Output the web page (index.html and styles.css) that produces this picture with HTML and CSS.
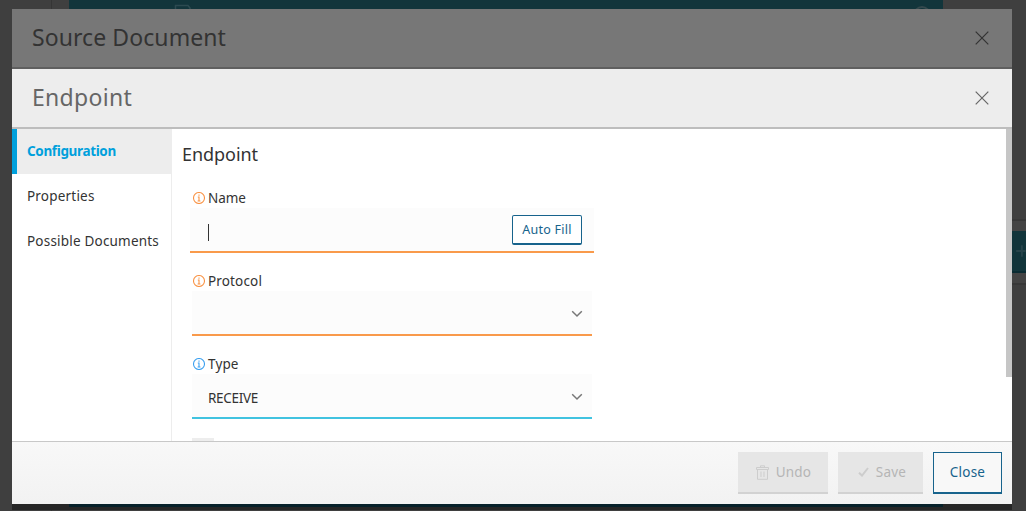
FILE: index.html
```html
<!DOCTYPE html>
<html lang="en">
<head>
<meta charset="utf-8">
<title>Endpoint</title>
<link rel="stylesheet" href="styles.css">
</head>
<body>
<div class="backdrop">
  <div class="page-line"></div>
  <div class="page-panel">
    <svg class="page-doc" width="18" height="16" viewBox="0 0 18 16"><path d="M1.5 16V1.5H14L16 4V16" fill="none" stroke="#2c4a50" stroke-width="1.5"/></svg>
    <svg class="page-round" width="18" height="18" viewBox="0 0 18 18"><circle cx="9" cy="9" r="8" fill="none" stroke="#34494d" stroke-width="2"/></svg>
  </div>
  <div class="page-node"><svg width="14" height="42" viewBox="0 0 14 42"><path d="M4 21H14M10 15V27" stroke="#27444a" stroke-width="2"/></svg></div>
</div>
<div class="under-shadow"><div class="under-strip"></div></div>
<div class="dialogs">
  <header class="bar bar-dim">
    <h1><span class="title-source">Source Document</span></h1>
    <svg class="x" width="14" height="14" viewBox="0 0 14 14"><path d="M.7.7 13.3 13.3M13.3.7.7 13.3"/></svg>
  </header>
  <section class="dialog">
    <header class="bar">
      <h1><span class="title-endpoint">Endpoint</span></h1>
      <svg class="x" width="14" height="14" viewBox="0 0 14 14"><path d="M.7.7 13.3 13.3M13.3.7.7 13.3"/></svg>
    </header>
    <div class="body">
      <nav class="tabs">
        <a class="tab active"><span class="t-config">Configuration</span></a>
        <a class="tab"><span class="t-props">Properties</span></a>
        <a class="tab"><span class="t-docs">Possible Documents</span></a>
      </nav>
      <main class="content">
        <h2>Endpoint</h2>
        <div class="field">
          <label><svg class="info warn" width="12" height="12" viewBox="0 0 12 12"><circle cx="6" cy="6" r="5.5"/><path d="M6 2.4V3.8M4.8 5H6V9M4.6 9H7.4"/></svg><span class="l-name">Name</span></label>
          <div class="control focused"><i class="caret"></i><button class="auto"><span>Auto Fill</span></button></div>
        </div>
        <div class="field">
          <label><svg class="info warn" width="12" height="12" viewBox="0 0 12 12"><circle cx="6" cy="6" r="5.5"/><path d="M6 2.4V3.8M4.8 5H6V9M4.6 9H7.4"/></svg><span class="l-protocol">Protocol</span></label>
          <div class="control required"><span></span><svg class="chev" width="12" height="8" viewBox="0 0 12 8"><path d="M1.2 1.3 6 6 10.8 1.3"/></svg></div>
        </div>
        <div class="field">
          <label><svg class="info" width="12" height="12" viewBox="0 0 12 12"><circle cx="6" cy="6" r="5.5"/><path d="M6 2.4V3.8M4.8 5H6V9M4.6 9H7.4"/></svg><span class="l-type">Type</span></label>
          <div class="control"><span class="value">RECEIVE</span><svg class="chev" width="12" height="8" viewBox="0 0 12 8"><path d="M1.2 1.3 6 6 10.8 1.3"/></svg></div>
        </div>
        <div class="checkbox"></div>
      </main>
      <div class="scroll"><div class="thumb"></div></div>
    </div>
    <footer class="footer">
      <button class="btn undo" disabled><svg width="13" height="15" viewBox="0 0 13 15"><path d="M.5 2.5H12.5V4.5H.5ZM4.5 2.5V.8H8.5V2.5M1.5 4.5V14.3H11.5V4.5M5 6.5V12M8 6.5V12"/></svg><span>Undo</span></button>
      <button class="btn save" disabled><svg width="11" height="10" viewBox="0 0 11 10"><path d="M1 5.8 4 8.6 10 1" stroke-width="2"/></svg><span>Save</span></button>
      <button class="btn close"><span>Close</span></button>
    </footer>
  </section>
</div>
</body>
</html>
```
FILE: styles.css
```css
* { box-sizing: border-box; }
body {
  margin: 0;
  height: 511px;
  position: relative;
  overflow: hidden;
  background: #3f3f3f;
  color: #333;
  font-family: "Noto Sans", "Open Sans", sans-serif;
  font-size: 13.5px;
}
h1, h2 { margin: 0; font-weight: 400; }
button { font: inherit; padding: 0; }
span { white-space: nowrap; }

.backdrop { position: absolute; inset: 0; }
.page-line { position: absolute; left: 51px; top: 0; width: 1px; height: 511px; background: #353535; }
.page-panel { position: absolute; left: 69px; top: 0; width: 874px; height: 507px; background: #12353b; }
.page-doc { position: absolute; left: 105px; top: 4px; }
.page-round { position: absolute; left: 844px; top: 6px; }
.page-node {
  position: absolute;
  left: 1012px;
  top: 219px;
  width: 14px;
  height: 66px;
  padding: 12px 0 10px;
  border-top: 2px solid #383838;
  border-bottom: 2px solid #383838;
  background: #444;
}
.page-node svg { display: block; margin-top: -2px; background: #12353b; border-bottom: 2px solid #0a2b32; }
.under-shadow { position: absolute; left: 12px; top: 504px; width: 1000px; height: 6px; background: #262626; }
.under-strip { margin-left: 57px; width: 874px; height: 3px; background: #07212a; }

.dialogs { position: relative; margin: 0 14px 0 12px; padding-top: 9px; }
.bar {
  display: flex;
  align-items: center;
  justify-content: space-between;
  height: 60px;
  padding: 0 23px 0 20px;
  background: #ededed;
  border-bottom: 2px solid #bdbdbd;
}
.bar h1 { padding-bottom: 2px; font-size: 23px; line-height: 32px; color: #666; letter-spacing: .3px; }
.bar-dim { background: #777; border-color: #5f5f5f; }
.bar-dim h1 { color: #333; letter-spacing: .08px; }
.x { fill: none; stroke: #666; stroke-width: 1.2; }
.bar-dim .x { stroke: #333; }

.dialog { height: 435px; display: flex; flex-direction: column; background: #fff; }
.body { display: flex; height: 312px; overflow: hidden; }
.tabs { width: 160px; flex: none; border-right: 1px solid #ededed; }
.tab { display: flex; align-items: center; height: 45px; padding: 0 0 2px 15px; letter-spacing: .2px; }
.tab.active { padding-left: 10px; border-left: 5px solid #00a0dc; background: #ededed; color: #00a0dc; font-weight: 700; letter-spacing: -.35px; }
.content { flex: 1; padding: 12px 0 0 10px; }
h2 { height: 27px; line-height: 26px; font-size: 18px; letter-spacing: -.05px; }
.field { width: 400px; height: 66px; margin: 17px 0 0 10px; }
h2 + .field { margin-top: 20px; }
.field label { display: flex; align-items: center; height: 20px; gap: 3px; padding-left: 1px; }
.field label span { letter-spacing: .15px; }
.field label .l-name { letter-spacing: -.1px; }
.info { fill: none; stroke: #3da1f0; stroke-width: 1.1; }
.info.warn { stroke: #f99446; }
.control {
  display: flex;
  align-items: center;
  justify-content: space-between;
  width: 400px;
  height: 45px;
  padding: 3px 9px 0 16px;
  background: #fcfcfc;
  border-bottom: 2px solid #41c3e0;
}
.control.required { border-color: #f99a4b; }
.control.focused { width: 404px; margin-left: -2px; padding: 0 12px 0 18px; border-color: #f99a4b; }
.value { letter-spacing: -.3px; padding-top: 1px; }
.caret { width: 1px; height: 17px; margin-top: 5px; background: #333; }
.auto { width: 70px; height: 30px; border: 1px solid #17638c; border-bottom-width: 2px; border-radius: 2px; background: #fff; color: #17638c; font-size: 12.5px; letter-spacing: .25px; }
.chev { fill: none; stroke: #777; stroke-width: 1.5; }
.checkbox { width: 22px; height: 22px; margin: 18px 0 0 10px; background: #ededed; }
.scroll { width: 6px; }
.thumb { height: 248px; background: #c6c6c6; }

.footer {
  flex: 1;
  display: flex;
  gap: 10px;
  justify-content: flex-end;
  padding: 10px 10px 0 0;
  border-top: 1px solid #c8c8c8;
  background: linear-gradient(#f8f8f8, #f2f2f2);
}
.btn { display: flex; align-items: center; justify-content: center; gap: 7px; height: 42px; border: 0; border-bottom: 2px solid #d2d2d2; background: #e6e6e6; color: #b5b5b5; letter-spacing: .2px; }
.btn svg { fill: none; stroke: #cdcdcd; }
.undo { width: 90px; padding-left: 1px; }
.save { width: 85px; padding-left: 3px; }
.close { width: 69px; border: 1px solid #17638c; border-bottom-width: 2px; background: #f8f8f8; color: #17638c; }
.close span { padding-bottom: 1px; }
```
